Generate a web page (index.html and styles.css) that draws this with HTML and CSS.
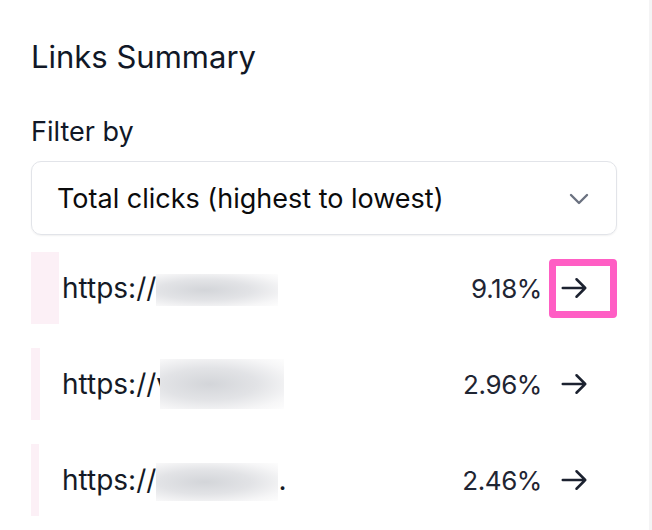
FILE: index.html
```html
<!DOCTYPE html>
<html lang="en">
  <head>
    <meta charset="UTF-8" />
    <meta name="viewport" content="width=device-width, initial-scale=1.0" />
    <title>Links Summary</title>
    <link rel="stylesheet" href="styles.css">
  </head>

  <body>
    <aside class="panel">
      <h2 class="panel-title">Links Summary</h2>

      <!-- Filter -->
      <label class="filter-label" for="sort">Filter by</label>
      <div class="select">
        <span class="select-value">Total clicks (highest to lowest)</span>
        <svg class="select-chevron" viewBox="0 0 20 12" fill="none" stroke="currentColor" stroke-width="2.4" stroke-linecap="round" stroke-linejoin="round">
          <path d="M2 2l8 8 8-8" />
        </svg>
      </div>

      <!-- Link rows -->
      <ul class="links">
        <li class="link-row">
          <span class="link-bar" style="width: 28px"></span>
          <span class="link-url">https://<span class="redacted r1"></span></span>
          <span class="link-pct">9.18%</span>
          <button class="link-go highlighted" aria-label="Open link">
            <svg viewBox="0 0 24 24" fill="none" stroke="currentColor" stroke-width="2" stroke-linecap="round" stroke-linejoin="round"><path d="M14 5l7 7m0 0l-7 7m7-7H3" /></svg>
          </button>
        </li>
        <li class="link-row">
          <span class="link-bar" style="width: 9px"></span>
          <span class="link-url">https://v<span class="redacted r2"></span></span>
          <span class="link-pct">2.96%</span>
          <button class="link-go" aria-label="Open link">
            <svg viewBox="0 0 24 24" fill="none" stroke="currentColor" stroke-width="2" stroke-linecap="round" stroke-linejoin="round"><path d="M14 5l7 7m0 0l-7 7m7-7H3" /></svg>
          </button>
        </li>
        <li class="link-row">
          <span class="link-bar" style="width: 8px"></span>
          <span class="link-url">https://<span class="redacted r3"></span>.</span>
          <span class="link-pct">2.46%</span>
          <button class="link-go" aria-label="Open link">
            <svg viewBox="0 0 24 24" fill="none" stroke="currentColor" stroke-width="2" stroke-linecap="round" stroke-linejoin="round"><path d="M14 5l7 7m0 0l-7 7m7-7H3" /></svg>
          </button>
        </li>
      </ul>
    </aside>
  </body>
</html>
```

FILE: styles.css
```css
/* General */

body {
  font-family: Inter, "Noto Sans", sans-serif;
  margin: 0;
  padding: 0;
  background: white;
  color: #111827;
  overflow: hidden;
}

.panel {
  box-sizing: border-box;
  width: 652px;
  height: 100vh;
  padding: 37px 32px 0 31px;
  border-right: 3px solid #f4f4f5;
}

.panel-title {
  margin: 0;
  font-size: 31px;
  font-weight: 400;
  line-height: 40px;
}

/* Filter */

.filter-label {
  display: block;
  margin-top: 38px;
  font-size: 27px;
  line-height: 34px;
}

.select {
  display: flex;
  align-items: center;
  justify-content: space-between;
  height: 72px;
  margin-top: 12px;
  padding: 0 27px 0 25px;
  border: 1px solid #e2e4e9;
  border-radius: 10px;
  box-shadow: 0 1px 2px rgba(0, 0, 0, 0.06);
  font-size: 27px;
  color: #0b0b0c;
}

.select-chevron {
  width: 20px;
  height: 12px;
  color: #6b7280;
  margin-top: 2px;
}

/* Links */

.links {
  display: flex;
  flex-direction: column;
  gap: 24px;
  list-style: none;
  margin: 17px 0 0;
  padding: 0;
}

.link-row {
  position: relative;
  display: flex;
  align-items: center;
  height: 72px;
  font-size: 28px;
  color: #141a26;
}

.link-bar {
  position: absolute;
  left: 0;
  top: 0;
  bottom: 0;
  background: #fcf0f6;
}

.link-url {
  position: relative;
  display: flex;
  align-items: center;
  flex: 1;
  padding-left: 31px;
}

.redacted {
  display: inline-block;
  width: 122px;
  height: 32px;
  margin-top: 4px;
  background: radial-gradient(ellipse at 40% 50%, #d3d5d9 0%, #e2e3e6 45%, #f6f6f7 80%, #fdfdfd 100%);
}

.r2 {
  width: 124px;
  height: 50px;
  margin-top: 0;
  margin-left: -12px;
}

.r3 {
  height: 38px;
}

.link-pct {
  position: relative;
  margin-right: 7px;
  font-size: 26px;
  letter-spacing: -0.4px;
  color: #1f2533;
}

.link-go {
  display: flex;
  align-items: center;
  width: 68px;
  height: 59px;
  padding: 0 0 0 3px;
  border: 7px solid transparent;
  border-radius: 4px;
  background: none;
  color: #1c2230;
  cursor: pointer;
}

.link-go svg {
  width: 30px;
  height: 30px;
}

.link-go.highlighted {
  border-color: #ff5ec4;
}
```
